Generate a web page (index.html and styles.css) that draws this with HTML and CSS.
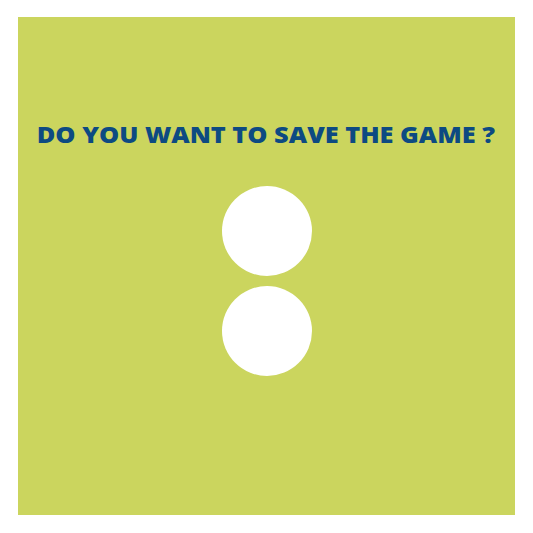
FILE: index.html
```html
<!DOCTYPE html>
<html>
<head>
<meta charset="utf-8">
<link rel="stylesheet" href="styles.css">
</head>
<body>
<div class="dialog">
  <h1 class="title">DO YOU WANT TO SAVE THE GAME ?</h1>
  <div class="buttons">
    <div class="circle"></div>
    <div class="circle"></div>
  </div>
</div>
</body>
</html>
```
FILE: styles.css
```css
html, body {
  margin: 0;
  padding: 0;
  background: #ffffff;
}
.dialog {
  margin: 17px 0 0 18px;
  width: 497px;
  height: 498px;
  background: #cbd55e;
  display: flex;
  flex-direction: column;
  align-items: center;
  box-sizing: border-box;
  padding-top: 102px;
}
.title {
  margin: 0;
  font-family: "Open Sans", sans-serif;
  font-weight: 800;
  font-size: 22px;
  line-height: 30px;
  color: #0d4a82;
  text-align: center;
  white-space: nowrap;
  transform: translateX(-1px) scaleX(1.152);
}
.buttons {
  margin-top: 37px;
  display: flex;
  flex-direction: column;
  gap: 10px;
}
.circle {
  width: 90px;
  height: 90px;
  border-radius: 50%;
  background: #ffffff;
}
```
